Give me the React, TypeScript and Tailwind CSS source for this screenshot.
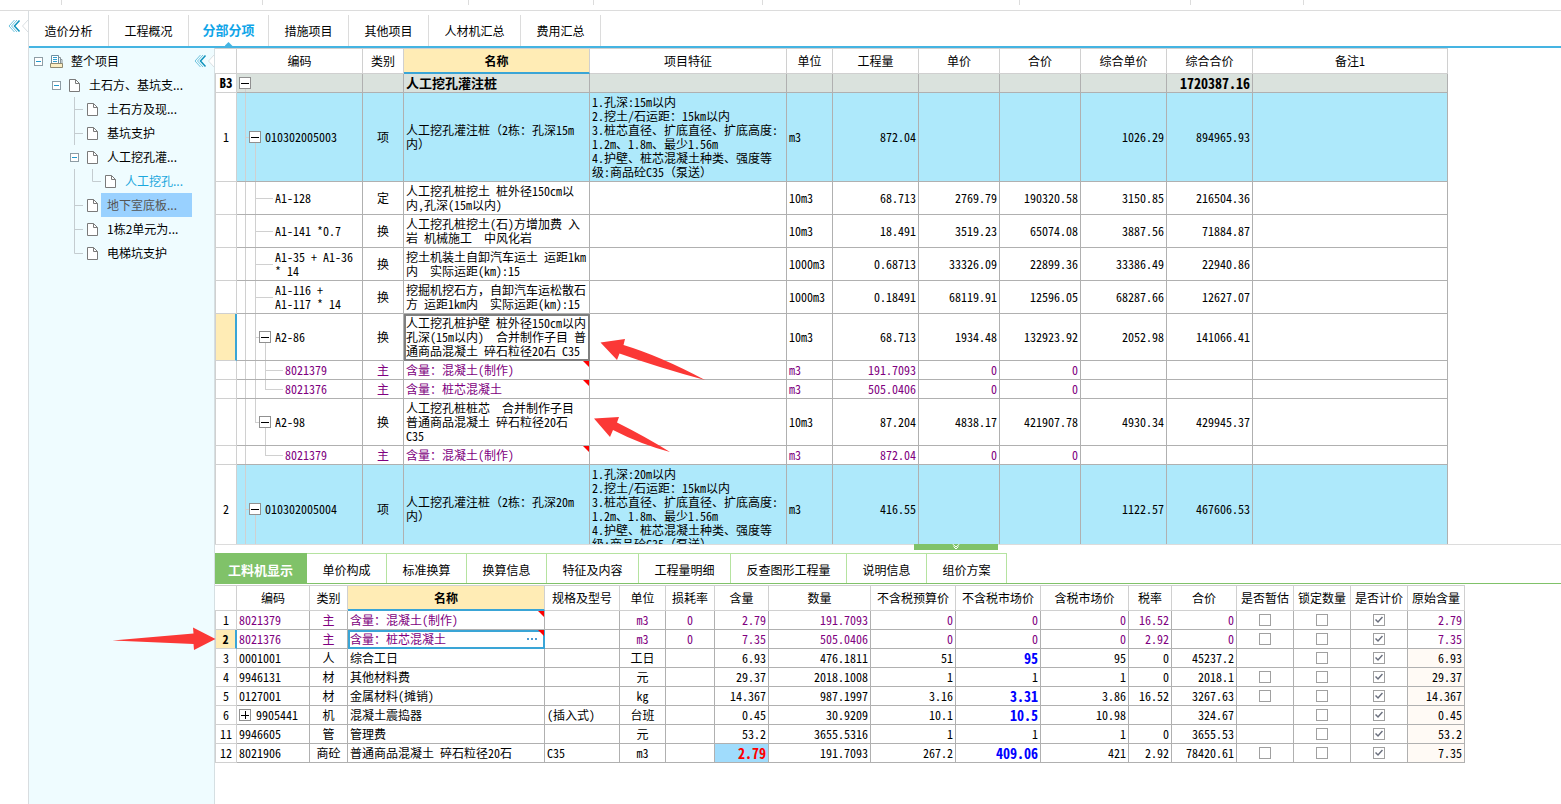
import { useState, type ReactNode } from 'react';
import clsx from 'clsx';

type Align = 'left' | 'center' | 'right';

interface TreeItem {
  label: string;
  level: number;
  open?: boolean;
  guides?: string[];
  state?: 'selected' | 'current';
}

interface QuantityRow {
  no: string;
  code: string;
  level: number;
  toggle?: boolean;
  guides: string[];
  kind: string;
  name: string;
  feature?: string;
  unit?: string;
  values: string[];
  tone: 'section' | 'item' | 'plain' | 'material';
  height: string;
  active?: boolean;
}

interface ResourceRow {
  no: string;
  code: string;
  kind: string;
  name: string;
  spec?: string;
  unit: string;
  loss?: string;
  amount: string;
  quantity: string;
  budget: string;
  market: string;
  taxed: string;
  rate: string;
  total: string;
  estimable?: boolean;
  original: string;
  material?: boolean;
  priced?: boolean;
}

const mainTabs = [
  { label: '造价分析', width: 'w-20' },
  { label: '工程概况', width: 'w-20' },
  { label: '分部分项', width: 'w-20' },
  { label: '措施项目', width: 'w-20' },
  { label: '其他项目', width: 'w-20' },
  { label: '人材机汇总', width: 'w-[92px]' },
  { label: '费用汇总', width: 'w-20' },
];

const detailTabs = [
  { label: '工料机显示', width: 'w-[92px]' },
  { label: '单价构成', width: 'w-20' },
  { label: '标准换算', width: 'w-20' },
  { label: '换算信息', width: 'w-20' },
  { label: '特征及内容', width: 'w-[92px]' },
  { label: '工程量明细', width: 'w-[92px]' },
  { label: '反查图形工程量', width: 'w-[116px]' },
  { label: '说明信息', width: 'w-20' },
  { label: '组价方案', width: 'w-20' },
];

// guides: one entry per indent column, drawn left to right
const tree: TreeItem[] = [
  { label: '整个项目', level: 0, open: true },
  { label: '土石方、基坑支...', level: 1, open: true, guides: [''] },
  { label: '土石方及现...', level: 2, guides: ['', '', 'tee'] },
  { label: '基坑支护', level: 2, guides: ['', '', 'tee'] },
  { label: '人工挖孔灌...', level: 2, open: true, guides: ['', ''] },
  { label: '人工挖孔...', level: 3, guides: ['', '', 'line', 'end'], state: 'current' },
  { label: '地下室底板...', level: 2, guides: ['', '', 'tee'], state: 'selected' },
  { label: '1栋2单元为...', level: 2, guides: ['', '', 'tee'] },
  { label: '电梯坑支护', level: 2, guides: ['', '', 'end'] },
];

const quantityColumns = [
  { label: '', width: 'w-[22px]' },
  { label: '编码', width: 'w-[126px]' },
  { label: '类别', width: 'w-[41px]' },
  { label: '名称', width: 'w-[186px]' },
  { label: '项目特征', width: 'w-[197px]' },
  { label: '单位', width: 'w-[46px]' },
  { label: '工程量', width: 'w-[86px]' },
  { label: '单价', width: 'w-[81px]' },
  { label: '合价', width: 'w-[81px]' },
  { label: '综合单价', width: 'w-[86px]' },
  { label: '综合合价', width: 'w-[86px]' },
  { label: '备注1', width: 'w-[195px]' },
];

const resourceColumns = [
  { label: '', width: 'w-[22px]' },
  { label: '编码', width: 'w-[73px]' },
  { label: '类别', width: 'w-[38px]' },
  { label: '名称', width: 'w-[197px]' },
  { label: '规格及型号', width: 'w-[75px]' },
  { label: '单位', width: 'w-[46px]' },
  { label: '损耗率', width: 'w-[49px]' },
  { label: '含量', width: 'w-[54px]' },
  { label: '数量', width: 'w-[102px]' },
  { label: '不含税预算价', width: 'w-[85px]' },
  { label: '不含税市场价', width: 'w-[85px]' },
  { label: '含税市场价', width: 'w-[88px]' },
  { label: '税率', width: 'w-[43px]' },
  { label: '合价', width: 'w-[65px]' },
  { label: '是否暂估', width: 'w-[57px]' },
  { label: '锁定数量', width: 'w-[57px]' },
  { label: '是否计价', width: 'w-[57px]' },
  { label: '原始含量', width: 'w-[57px]' },
];

const feature = (depth: string) =>
  `1.孔深:${depth}以内\n2.挖土/石运距：15km以内\n3.桩芯直径、扩底直径、扩底高度:\n1.2m、1.8m、最少1.56m\n4.护壁、桩芯混凝土种类、强度等\n级:商品砼C35（泵送）`;

const quantities: QuantityRow[] = [
  {
    no: 'B3', code: '', level: 0, toggle: true, guides: ['bottom'], kind: '', name: '人工挖孔灌注桩',
    values: ['', '', '', '', '1720387.16'], tone: 'section', height: 'h-[19px]',
  },
  {
    no: '1', code: '010302005003', level: 1, toggle: true, guides: ['full', 'bottom'], kind: '项',
    name: '人工挖孔灌注桩（2栋：孔深15m\n内）', feature: feature('15m'), unit: 'm3',
    values: ['872.04', '', '', '1026.29', '894965.93'], tone: 'item', height: 'h-[89px]',
  },
  {
    no: '', code: 'A1-128', level: 2, guides: ['full', 'full'], kind: '定',
    name: '人工挖孔桩挖土 桩外径150cm以\n内,孔深(15m以内)', unit: '10m3',
    values: ['68.713', '2769.79', '190320.58', '3150.85', '216504.36'], tone: 'plain', height: 'h-[33px]',
  },
  {
    no: '', code: 'A1-141 *0.7', level: 2, guides: ['full', 'full'], kind: '换',
    name: '人工挖孔桩挖土(石)方增加费 入\n岩 机械施工  中风化岩', unit: '10m3',
    values: ['18.491', '3519.23', '65074.08', '3887.56', '71884.87'], tone: 'plain', height: 'h-[33px]',
  },
  {
    no: '', code: 'A1-35 + A1-36\n* 14', level: 2, guides: ['full', 'full'], kind: '换',
    name: '挖土机装土自卸汽车运土 运距1km\n内  实际运距(km):15', unit: '1000m3',
    values: ['0.68713', '33326.09', '22899.36', '33386.49', '22940.86'], tone: 'plain', height: 'h-[33px]',
  },
  {
    no: '', code: 'A1-116 +\nA1-117 * 14', level: 2, guides: ['full', 'full'], kind: '换',
    name: '挖掘机挖石方，自卸汽车运松散石\n方 运距1km内  实际运距(km):15', unit: '1000m3',
    values: ['0.18491', '68119.91', '12596.05', '68287.66', '12627.07'], tone: 'plain', height: 'h-[33px]',
  },
  {
    no: '', code: 'A2-86', level: 2, toggle: true, guides: ['full', 'full', 'bottom'], kind: '换',
    name: '人工挖孔桩护壁 桩外径150cm以内\n孔深(15m以内)  合并制作子目 普\n通商品混凝土 碎石粒径20石 C35', unit: '10m3',
    values: ['68.713', '1934.48', '132923.92', '2052.98', '141066.41'], tone: 'plain', height: 'h-[47px]', active: true,
  },
  {
    no: '', code: '8021379', level: 3, guides: ['full', 'full', 'full'], kind: '主', name: '含量：混凝土(制作)',
    unit: 'm3', values: ['191.7093', '0', '0', '', ''], tone: 'material', height: 'h-[19px]',
  },
  {
    no: '', code: '8021376', level: 3, guides: ['full', 'full', 'top'], kind: '主', name: '含量：桩芯混凝土',
    unit: 'm3', values: ['505.0406', '0', '0', '', ''], tone: 'material', height: 'h-[19px]',
  },
  {
    no: '', code: 'A2-98', level: 2, toggle: true, guides: ['full', 'top', 'bottom'], kind: '换',
    name: '人工挖孔桩桩芯  合并制作子目\n普通商品混凝土 碎石粒径20石\nC35', unit: '10m3',
    values: ['87.204', '4838.17', '421907.78', '4930.34', '429945.37'], tone: 'plain', height: 'h-[47px]',
  },
  {
    no: '', code: '8021379', level: 3, guides: ['full', '', 'top'], kind: '主', name: '含量：混凝土(制作)',
    unit: 'm3', values: ['872.04', '0', '0', '', ''], tone: 'material', height: 'h-[19px]',
  },
  {
    no: '2', code: '010302005004', level: 1, toggle: true, guides: ['full', 'bottom'], kind: '项',
    name: '人工挖孔灌注桩（2栋：孔深20m\n内）', feature: feature('20m'), unit: 'm3',
    values: ['416.55', '', '', '1122.57', '467606.53'], tone: 'item', height: 'h-[89px]',
  },
];

const resources: ResourceRow[] = [
  { no: '1', code: '8021379', kind: '主', name: '含量：混凝土(制作)', unit: 'm3', loss: '0', amount: '2.79', quantity: '191.7093', budget: '0', market: '0', taxed: '0', rate: '16.52', total: '0', estimable: true, original: '2.79', material: true },
  { no: '2', code: '8021376', kind: '主', name: '含量：桩芯混凝土', unit: 'm3', loss: '0', amount: '7.35', quantity: '505.0406', budget: '0', market: '0', taxed: '0', rate: '2.92', total: '0', estimable: true, original: '7.35', material: true },
  { no: '3', code: '0001001', kind: '人', name: '综合工日', unit: '工日', amount: '6.93', quantity: '476.1811', budget: '51', market: '95', taxed: '95', rate: '0', total: '45237.2', original: '6.93', priced: true },
  { no: '4', code: '9946131', kind: '材', name: '其他材料费', unit: '元', amount: '29.37', quantity: '2018.1008', budget: '1', market: '1', taxed: '1', rate: '0', total: '2018.1', estimable: true, original: '29.37' },
  { no: '5', code: '0127001', kind: '材', name: '金属材料(摊销)', unit: 'kg', amount: '14.367', quantity: '987.1997', budget: '3.16', market: '3.31', taxed: '3.86', rate: '16.52', total: '3267.63', estimable: true, original: '14.367', priced: true },
  { no: '6', code: '9905441', kind: '机', name: '混凝土震捣器', spec: '(插入式)', unit: '台班', amount: '0.45', quantity: '30.9209', budget: '10.1', market: '10.5', taxed: '10.98', rate: '', total: '324.67', original: '0.45', priced: true },
  { no: '11', code: '9946605', kind: '管', name: '管理费', unit: '元', amount: '53.2', quantity: '3655.5316', budget: '1', market: '1', taxed: '1', rate: '0', total: '3655.53', original: '53.2' },
  { no: '12', code: '8021906', kind: '商砼', name: '普通商品混凝土 碎石粒径20石', spec: 'C35', unit: 'm3', amount: '2.79', quantity: '191.7093', budget: '267.2', market: '409.06', taxed: '421', rate: '2.92', total: '78420.61', estimable: true, original: '7.35', priced: true },
];

function CollapseIcon() {
  return (
    <svg className="h-[14px] w-[20px]" viewBox="0 0 20 14" fill="none">
      <path d="M6.500 1 1 7l5.500 6M9 1 3.500 7 9 13" stroke="#6fc3de" />
      <path d="M11.500 1.500 6.500 7l5 5.500" stroke="#0f93bd" strokeWidth="1.500" />
      <path d="M20 1 14.500 7 20 13" fill="#fff" stroke="#d9dfe2" />
    </svg>
  );
}

function PageIcon() {
  return (
    <svg className="h-[13px] w-[11px]" viewBox="0 0 11 13" fill="none">
      <path d="M.5.5h6l4 4v8H.5z" fill="#fff" stroke="#7a7a7a" />
      <path d="M6.500.5v4h4" stroke="#7a7a7a" />
    </svg>
  );
}

function ProjectIcon() {
  return (
    <svg className="h-[13px] w-[13px]" viewBox="0 0 13 13" fill="none">
      <path d="M8.500 2.500h2v8M10.500 4.500h1.500v6" stroke="#8a9499" />
      <path d="M1.500.5h7v9h-7z" fill="#fff" stroke="#6b8fa0" />
      <path d="M.5 8.500v4h12v-4z" fill="#fbeec4" stroke="#8f8a70" />
      <path d="M3 2.500h4M3 4.500h4M3 6.500h4" stroke="#2f9fd0" />
    </svg>
  );
}

function Toggle({ open = true, label }: { open?: boolean; label: string }) {
  return (
    <button
      type="button"
      aria-label={label}
      className="relative grid h-3 w-3 shrink-0 place-items-center border border-[#909090] bg-white">
      <svg className="h-2 w-2" viewBox="0 0 8 8" stroke="#000">
        <path d={open ? 'M0 4.500h8' : 'M0 4.500h8M4.500 0v8'} />
      </svg>
    </button>
  );
}

function TreeGuide({ kind }: { kind: string }) {
  return (
    <svg className="h-6 w-[18px] shrink-0" viewBox="0 0 18 24" stroke="#c4ccd0">
      {kind === 'tee' && <path d="M9.500 0v24M9.500 12.500h12" />}
      {kind === 'line' && <path d="M9.500 0v24" />}
      {kind === 'end' && <path d="M9.500 0v12.500h12" fill="none" />}
    </svg>
  );
}

function ProjectTree() {
  return (
    <ul className="text-xs">
      {tree.map((item, index) => (
        <li key={item.label} className="flex h-6 items-center">
          {(item.guides ?? []).map((kind, i) => (
            <TreeGuide key={i} kind={kind} />
          ))}
          {item.open && (
            <button
              type="button"
              aria-label={`折叠 ${item.label}`}
              className="grid h-6 w-[18px] shrink-0 place-items-center">
              <span className="grid h-[9px] w-[9px] place-items-center border border-[#8e9da5] bg-white">
                <span className="h-px w-[5px] bg-[#2199cc]" />
              </span>
            </button>
          )}
          <span className="grid h-6 w-[18px] shrink-0 place-items-center">
            {item.level === 0 ? <ProjectIcon /> : <PageIcon />}
          </span>
          <button
            type="button"
            className={clsx(
              'h-6 flex-1 px-[6px] text-left whitespace-nowrap',
              index > 0 && 'mr-[22px]',
              item.state === 'selected' && 'bg-[#99d1ff] text-[#555]',
              item.state === 'current' && 'text-[#1ba7dd]'
            )}>
            {item.label}
          </button>
          {index === 0 && (
            <button type="button" aria-label="收起项目树">
              <CollapseIcon />
            </button>
          )}
        </li>
      ))}
    </ul>
  );
}

function HeaderRow({ columns }: { columns: { label: string; width: string }[] }) {
  return (
    <thead>
      <tr>
        {columns.map((column, i) => (
          <th
            key={i}
            scope="col"
            className={clsx(
              'h-[26px] border-t border-r border-t-[#d0d0d0] border-r-[#d0d0d0] p-0',
              column.width,
              column.label === '名称'
                ? 'border-b-2 border-b-[#3aa5d6] bg-[#ffecb5] font-bold'
                : 'border-b border-b-[#d0d0d0] font-normal'
            )}>
            {column.label}
          </th>
        ))}
      </tr>
    </thead>
  );
}

// Cells use half-width latin glyphs; full-width punctuation has to keep its own width.
function GridText({ text = '' }: { text?: string }) {
  return text.split(/([（），：])/).map((part, i) =>
    i % 2 === 1 ? (
      <span key={i} className="[font-feature-settings:normal]">
        {part}
      </span>
    ) : (
      part
    )
  );
}

function RowNumber({ active, children }: { active?: boolean; children: ReactNode }) {
  return (
    <td
      className={clsx(
        'border-b border-l border-[#d0d0d0] p-0 text-center',
        active ? 'border-r-2 border-r-[#3aa5d6] bg-[#ffecb5] font-bold' : 'border-r bg-white'
      )}>
      {children}
    </td>
  );
}

function Cell({ align = 'left', className, children }: { align?: Align; className?: string; children?: ReactNode }) {
  return (
    <td
      className={clsx(
        'relative border-r border-b border-[#b0b0b0] px-[2px] py-0 whitespace-pre',
        align === 'right' && 'text-right',
        align === 'center' && 'text-center',
        className
      )}>
      {children}
    </td>
  );
}

function NoteMark() {
  return (
    <span className="absolute top-0 right-0 h-[6px] w-[6px] bg-[#ff0000] [clip-path:polygon(0_0,100%_0,100%_100%)]" />
  );
}

const guideLeft = ['left-[8px]', 'left-[18px]', 'left-[28px]'];
const codeIndent = ['pl-[2px]', 'pl-[12px]', 'pl-[22px]', 'pl-[48px]'];

function CodeCell({ row }: { row: QuantityRow }) {
  const parent = guideLeft[row.level - 1];

  return (
    <Cell className="pl-0">
      {row.guides.map((kind, i) => (
        <span
          key={i}
          className={clsx(
            'absolute w-px',
            guideLeft[i],
            kind && 'bg-[#d0d0d0]',
            kind === 'full' && 'inset-y-0',
            kind === 'top' && 'top-0 h-1/2',
            kind === 'bottom' && 'bottom-0 h-1/2'
          )}
        />
      ))}
      {parent && <span className={clsx('absolute top-1/2 h-px bg-[#d0d0d0]', parent, row.toggle ? 'w-[6px]' : 'w-[18px]')} />}
      <div
        className={clsx('flex items-center', row.level === 2 && !row.toggle ? 'pl-[38px]' : codeIndent[row.level])}>
        {row.toggle && <Toggle label={`折叠 ${row.code || row.name}`} />}
        <span className={clsx(row.toggle && 'pl-1')}>{row.code}</span>
      </div>
    </Cell>
  );
}

function QuantityTable() {
  return (
    <table className="w-[1233px] table-fixed border-separate border-spacing-0">
      <HeaderRow columns={quantityColumns} />
      <tbody>
        {quantities.map((row, i) => (
          <tr
            key={i}
            className={clsx(
              row.height,
              row.tone === 'section' && 'bg-[#dae2dd] text-[13px] font-bold',
              row.tone === 'item' && 'bg-[#aee9fb]',
              row.tone === 'material' && 'text-[#800080]'
            )}>
            <RowNumber active={row.active}>{row.no}</RowNumber>
            <CodeCell row={row} />
            <Cell align="center">{row.kind}</Cell>
            <Cell className={clsx(row.active && 'outline-2 -outline-offset-2 outline-[#808080]')}>
              <GridText text={row.name} />
              {row.tone === 'material' && <NoteMark />}
            </Cell>
            <Cell>
              <GridText text={row.feature} />
            </Cell>
            <Cell>{row.unit}</Cell>
            {row.values.map((value, j) => (
              <Cell key={j} align="right" className={clsx(row.tone === 'section' && 'text-[14px]')}>
                {value}
              </Cell>
            ))}
            <Cell />
          </tr>
        ))}
      </tbody>
    </table>
  );
}

function CheckCell({ shown = true, checked = false, label }: { shown?: boolean; checked?: boolean; label: string }) {
  return (
    <Cell>
      {shown && (
        <span className="grid place-items-center">
          <input
            type="checkbox"
            aria-label={label}
            defaultChecked={checked}
            className="peer col-start-1 row-start-1 h-3 w-3 appearance-none border border-[#a0a0a0] bg-white"
          />
          <svg
            className="pointer-events-none invisible col-start-1 row-start-1 h-2 w-2 peer-checked:visible"
            viewBox="0 0 8 8"
            fill="none"
            stroke="#6a6f7d"
            strokeWidth="1.500">
            <path d="M.5 3.500 3 6l4.500-5" />
          </svg>
        </span>
      )}
    </Cell>
  );
}

function ResourceTable() {
  return (
    <table className="w-[1250px] table-fixed border-separate border-spacing-0">
      <HeaderRow columns={resourceColumns} />
      <tbody>
        {resources.map(row => {
          const editing = row.no === '2';
          const changed = row.no === '12';
          return (
            <tr key={row.no} className={clsx('h-[19px]', row.material && 'text-[#800080]')}>
              <RowNumber active={editing}>
                <span className="text-black">{row.no}</span>
              </RowNumber>
              <Cell>
                <div className="flex items-center gap-[5px]">
                  {row.no === '6' && <Toggle open={false} label={`展开 ${row.name}`} />}
                  {row.code}
                </div>
              </Cell>
              <Cell align="center">{row.kind}</Cell>
              <Cell className={clsx(editing && 'outline-2 -outline-offset-2 outline-[#3aa5d6]')}>
                <div className="flex items-center justify-between">
                  <span>
                    <GridText text={row.name} />
                  </span>
                  {editing && (
                    <button type="button" aria-label="选择材料" className="mr-[5px] flex gap-[2px]">
                      <span className="h-[2px] w-[2px] bg-[#4a9bd4]" />
                      <span className="h-[2px] w-[2px] bg-[#4a9bd4]" />
                      <span className="h-[2px] w-[2px] bg-[#4a9bd4]" />
                    </button>
                  )}
                </div>
                {row.material && <NoteMark />}
              </Cell>
              <Cell>{row.spec}</Cell>
              <Cell align="center">{row.unit}</Cell>
              <Cell align="center">{row.loss}</Cell>
              <Cell align="right" className={clsx(changed && 'bg-[#a0dcfc] text-[14px] font-bold text-[#ff0000]')}>
                {row.amount}
              </Cell>
              <Cell align="right">{row.quantity}</Cell>
              <Cell align="right">{row.budget}</Cell>
              <Cell align="right" className={clsx(row.priced && 'text-[14px] font-bold text-[#0000ff]')}>
                {row.market}
              </Cell>
              <Cell align="right">{row.taxed}</Cell>
              <Cell align="right">{row.rate}</Cell>
              <Cell align="right">{row.total}</Cell>
              <CheckCell shown={!!row.estimable} label={`是否暂估 ${row.name}`} />
              <CheckCell label={`锁定数量 ${row.name}`} />
              <CheckCell checked label={`是否计价 ${row.name}`} />
              <Cell align="right" className={clsx(!row.material && 'bg-[#fffaf5]')}>
                {row.original}
              </Cell>
            </tr>
          );
        })}
      </tbody>
    </table>
  );
}

function Arrows() {
  return (
    <svg className="pointer-events-none absolute inset-0 h-full w-full" fill="#fb3836">
      <path d="M600.500 342.500 625 339l-1.500 6Q660 356 705 380 660 368 619.500 353.500l-2.500 6.500z" />
      <path d="M594 418.500 619 417l-2 5.500Q646 437 670 452 640 444 613 430l-3 7z" />
      <path d="M215.500 639 193 627.500l.5 6L112.500 640.500l81 3.500.5 6z" />
    </svg>
  );
}

export default function App() {
  const [mainTab, setMainTab] = useState('分部分项');
  const [detailTab, setDetailTab] = useState('工料机显示');

  return (
    <div className="relative flex h-screen flex-col overflow-hidden bg-white font-['Noto_Sans_CJK_SC',sans-serif] text-xs text-black">
      {/* bottom edge of the ribbon groups */}
      <div className="flex h-[11px] shrink-0 items-start border-b border-[#dcdcdc]">
        <span className="h-[5px] w-[62px] border-r border-[#dcdcdc]" />
        <span className="h-[5px] w-[201px] border-r border-[#dcdcdc]" />
        <span className="h-[5px] w-[206px] border-r border-[#dcdcdc]" />
        <span className="h-[5px] w-[125px] border-r border-[#dcdcdc]" />
        <span className="h-[5px] w-[169px] border-r border-[#dcdcdc]" />
        <span className="h-[5px] w-[257px] border-r border-[#dcdcdc]" />
        <span className="h-[5px] w-[171px] border-r border-[#dcdcdc]" />
        <span className="h-[5px] w-[113px] border-r border-[#dcdcdc]" />
      </div>

      <div className="flex min-h-0 flex-1">
        <div className="w-[29px] shrink-0 border-r border-[#d8dde0] pt-2 pl-2">
          <button type="button" aria-label="收起导航" className="block">
            <CollapseIcon />
          </button>
        </div>

        <div className="flex min-w-0 flex-1 flex-col">
          <nav className="flex h-[37px] shrink-0 border-b-2 border-[#45b4e2] pt-1">
            {mainTabs.map(tab => (
              <button
                key={tab.label}
                type="button"
                onClick={() => setMainTab(tab.label)}
                className={clsx(
                  'relative border-r border-[#dcdcdc]',
                  tab.width,
                  mainTab === tab.label && 'pb-[2px] text-[13px] font-bold text-[#10a5e8]'
                )}>
                {tab.label}
                {mainTab === tab.label && (
                  <span className="absolute bottom-0 left-1/2 h-1 w-2 -translate-x-1/2 bg-[#45b4e2] [clip-path:polygon(50%_0,100%_100%,0_100%)]" />
                )}
              </button>
            ))}
          </nav>

          <div className="flex min-h-0 flex-1">
            <aside className="w-[186px] shrink-0 border-r border-[#d5dfe2] bg-[#effcff] pt-px">
              <ProjectTree />
            </aside>

            <main className="flex min-w-0 flex-1 flex-col leading-[14px] [font-feature-settings:'hwid']">
              <section className="min-h-0 flex-1 overflow-hidden">
                <QuantityTable />
              </section>

              <section className="h-[260px] shrink-0 border-t border-[#dcdcdc]">
                <div className="flex h-2 items-start justify-center pl-[135px]">
                  <button
                    type="button"
                    aria-label="收起明细"
                    className="-mt-px grid h-[6px] w-[84px] place-items-center bg-[#80c269]">
                    <svg className="h-[6px] w-[8px]" viewBox="0 0 8 6" fill="none" stroke="#fff">
                      <path d="M.5 0 4 3 7.500 0M1.500 2.500 4 5l2.500-2.500" />
                    </svg>
                  </button>
                </div>
                <nav className="flex h-[31px] border-b border-b-[#80c269]">
                  {detailTabs.map(tab => (
                    <button
                      key={tab.label}
                      type="button"
                      onClick={() => setDetailTab(tab.label)}
                      className={clsx(
                        'border-t border-r pt-[2px]',
                        tab.width,
                        detailTab === tab.label
                          ? 'border-[#80c269] bg-[#80c269] text-[13px] font-bold text-white'
                          : 'border-[#b5e3a0]'
                      )}>
                      {tab.label}
                    </button>
                  ))}
                </nav>
                <div className="overflow-hidden pt-px">
                  <ResourceTable />
                </div>
              </section>
            </main>
          </div>
        </div>
      </div>

      <Arrows />
    </div>
  );
}
